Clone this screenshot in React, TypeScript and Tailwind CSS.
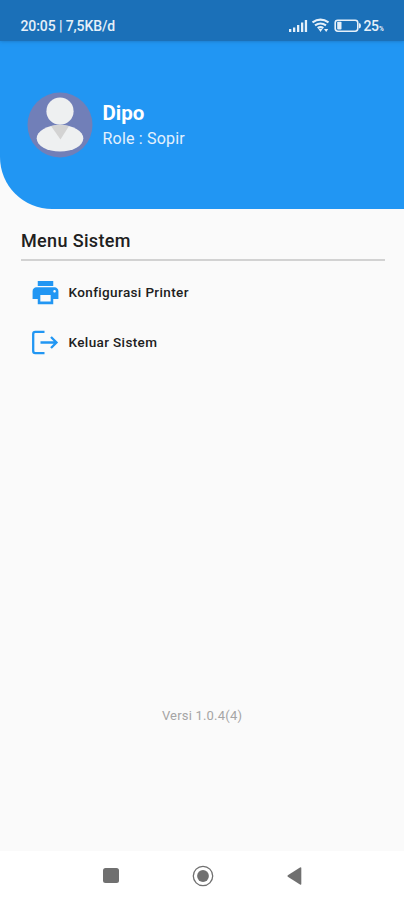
function StatusBar() {
  return (
    <div className="flex h-[41px] items-center bg-[#1b70b8] pl-[20.5px] pr-[19px] pt-[11px] text-[#e6f0f9] shadow-[0_0_4px_#1b70b8]">
      <span className="text-[14px] font-medium leading-[16px] tracking-[-0.1px] whitespace-nowrap">20:05 | 7,5KB/d</span>
      <svg className="ml-auto" width="96" height="16" viewBox="289 18 96 16" fill="currentColor">
        <path d="M289 29h2.3v3H289zM293 27.5h2.3V32H293zM297 25h2.3v7H297zM301 22.5h2.3V32H301zM304.8 20h2.3v12h-2.3z" />
        <g fill="none" stroke="currentColor" strokeWidth="2.2">
          <path d="M312.5 22.3q8-5.4 16 0" />
          <path d="M315 25.4q5.5-3.8 11 0" />
          <path d="M317.7 28.2q2.8-2 5.6 0" />
        </g>
        <path d="M318.5 29h4l-2 3zM324 29h4.2l-2 3z" />
        <rect x="335.2" y="20.2" width="22.6" height="11" rx="2.6" fill="none" stroke="currentColor" strokeWidth="1.6" />
        <rect x="337.2" y="21.8" width="4.3" height="7.8" rx=".8" />
        <path d="M359 23q2 .2 2 2.7t-2 2.7z" />
        <text x="363.5" y="31" fontSize="14" fontWeight="500" fontFamily="Roboto, sans-serif" textLength="15.5">25</text>
        <text x="379" y="31" fontSize="6.5" fontWeight="700" fontFamily="Roboto, sans-serif">%</text>
      </svg>
    </div>
  );
}

function Avatar() {
  return (
    <svg width="66" height="66" viewBox="0 0 66 66">
      <circle cx="33" cy="33" r="32.5" fill="#717fb8" />
      <ellipse cx="33" cy="46.3" rx="23.3" ry="13.3" fill="#eef0f1" />
      <path d="M24 34q9-2 18 0l-8.5 13.5z" fill="#d3d3d3" />
      <circle cx="33" cy="19.2" r="13.6" fill="#eef0f1" />
    </svg>
  );
}

export default function App() {
  return (
    <div className="flex h-[900px] w-[404px] flex-col bg-[#fafafa] font-[Roboto,sans-serif]">
      <header className="h-[209px] rounded-bl-[52px] bg-[#2196f3]">
        <StatusBar />
        <div className="flex items-start pl-[27px] pt-[50.5px]">
          <Avatar />
          <div className="pl-[9.5px] pt-[9.5px] text-white">
            <div className="text-[20.5px] font-bold leading-[24px]">Dipo</div>
            <div className="pt-[2px] text-[16px] leading-[24px] tracking-[0.2px] text-[#e3f1fd]">Role : Sopir</div>
          </div>
        </div>
      </header>
      <main className="flex grow flex-col px-[21px] pt-[20px]">
        <h1 className="mr-[-2px] h-[32px] border-b-2 border-[#d2d2d2] text-[18px] font-medium leading-[24px] tracking-[0.35px] text-[#202020]">Menu Sistem</h1>
        <ul className="text-[13.5px] font-medium tracking-[0.37px] text-[#202020]">
          <li className="flex h-[50px] items-center pl-[8.5px] pt-[13px]">
            <svg width="31" height="31" viewBox="0 0 24 24" fill="#2196f3">
              <path d="M19 8H5c-1.66 0-3 1.34-3 3v6h4v4h12v-4h4v-6c0-1.66-1.34-3-3-3zm-3 11H8v-5h8v5zm3-7c-.55 0-1-.45-1-1s.45-1 1-1 1 .45 1 1-.45 1-1 1zm-1-9H6v4h12V3z" />
            </svg>
            <span className="pl-[8px]">Konfigurasi Printer</span>
          </li>
          <li className="flex h-[50px] items-center pl-[8.5px] pt-[13px]">
            <svg width="31" height="31" viewBox="0 0 31 31" fill="none" stroke="#2196f3" strokeWidth="2.3">
              <path d="M14.5 4.8H5.3Q3.2 4.8 3.2 6.9v17.2q0 2.1 2.1 2.1h9.2M10.5 15.5h16M21 10l5.5 5.5L21 21" />
            </svg>
            <span className="pl-[8px]">Keluar Sistem</span>
          </li>
        </ul>
        <p className="mt-auto pb-[127px] text-center text-[13px] leading-[16px] tracking-[0.2px] text-[#a5a5a5]">Versi 1.0.4(4)</p>
      </main>
      <nav className="flex h-[49px] shrink-0 items-center justify-between bg-white pl-[103px] pr-[102px]">
        <div className="size-[15.5px] rounded-[2.5px] bg-[#707070]" />
        <svg width="22" height="22" viewBox="0 0 22 22">
          <circle cx="11" cy="11" r="9.7" fill="none" stroke="#707070" strokeWidth="1.3" />
          <circle cx="11" cy="11" r="5.9" fill="#707070" />
        </svg>
        <svg width="15" height="18" viewBox="0 0 15 18" fill="#707070">
          <path d="M14.3.7v16.6Q14 18 13 17.5L.8 9.7Q0 9 .8 8.3L13 .5q1-.5 1.3.2z" />
        </svg>
      </nav>
    </div>
  );
}
